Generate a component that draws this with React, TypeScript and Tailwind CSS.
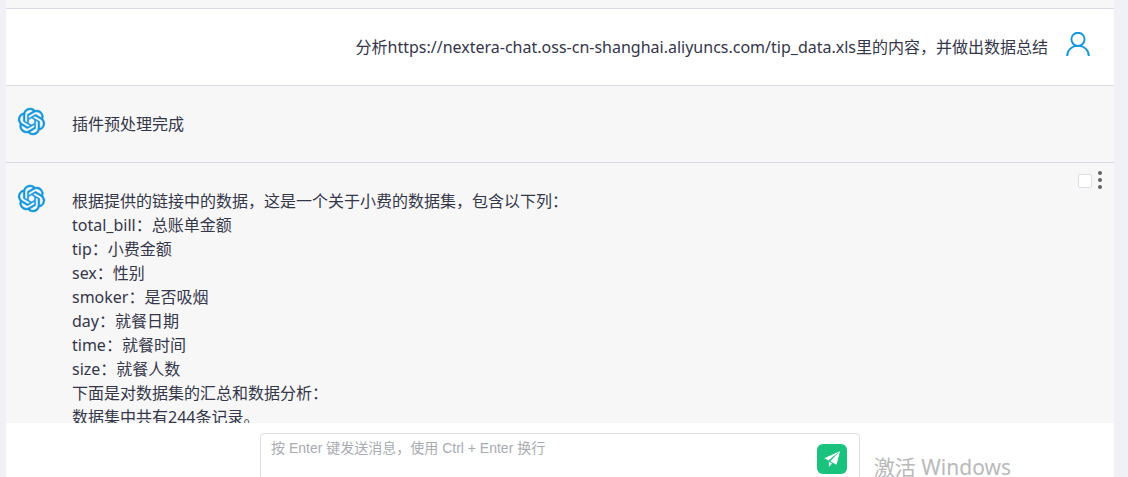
import type { ReactNode } from "react";
import { SiOpenai } from "react-icons/si";

const analysis = [
  "根据提供的链接中的数据，这是一个关于小费的数据集，包含以下列：",
  "total_bill：总账单金额",
  "tip：小费金额",
  "sex：性别",
  "smoker：是否吸烟",
  "day：就餐日期",
  "time：就餐时间",
  "size：就餐人数",
  "下面是对数据集的汇总和数据分析：",
  "数据集中共有244条记录。",
];

function UserIcon() {
  return (
    <svg viewBox="0 0 24 24" className="size-6" fill="none" stroke="#1296db" strokeWidth="1.9" aria-hidden="true">
      <circle cx="12" cy="7.3" r="6.6" />
      <path d="M1.2 24C1.2 17.8 6 13.9 12 13.9S22.800 17.800 22.800 24" />
    </svg>
  );
}

function SendIcon() {
  return (
    <svg viewBox="0 0 20 20" className="size-[18px]" fill="#fff" aria-hidden="true">
      <path d="M19 1 1.500 9.200 6 11.800Z" />
      <path d="M19 1 8 12.500 15 16.500Z" />
      <path d="M6.500 13 6.500 19 10 15Z" />
    </svg>
  );
}

function BotMessage({ children, actions }: { children: ReactNode; actions?: ReactNode }) {
  return (
    <article className="relative flex gap-[27px] border-b border-[#d9dae5] bg-[#f7f7f7] px-3">
      <SiOpenai
        className="mt-[22px] size-[27px] shrink-0 overflow-visible text-[#1296db]"
        stroke="currentColor"
        strokeWidth="0.4"
        aria-hidden="true"
      />
      <div className="py-[26px]">{children}</div>
      {actions}
    </article>
  );
}

export default function App() {
  return (
    <div className="h-screen overflow-hidden bg-[#f0f1f7] pr-3.5 pl-1.5 font-['Noto_Sans','Noto_Sans_CJK_SC',sans-serif] text-base leading-6 text-[#34364a]">
      <main className="flex h-full flex-col bg-white">
        <section className="min-h-0 flex-1 overflow-hidden">
          <div className="h-[9px] border-b border-[#d9dae5] bg-[#f7f7f7]" />
          <article className="flex items-start justify-end gap-[18px] border-b border-[#d9dae5] bg-white pr-6 pl-3">
            <p className="py-[26px] whitespace-nowrap">
              分析https://nextera-chat.oss-cn-shanghai.aliyuncs.com/tip_data.xls里的内容，并做出数据总结
            </p>
            <div className="mt-[23px] shrink-0">
              <UserIcon />
            </div>
          </article>
          <BotMessage>
            <p>插件预处理完成</p>
          </BotMessage>
          <BotMessage
            actions={
              <div className="absolute top-2 right-2.5 flex items-center gap-1">
                <input
                  type="checkbox"
                  aria-label="选择消息"
                  className="size-3.5 appearance-none rounded-[2px] border border-[#dcdfe6] bg-white checked:bg-[#1296db]"
                />
                <button type="button" aria-label="更多" className="block">
                  <svg viewBox="0 0 8 20" className="h-5 w-2" fill="#606266" aria-hidden="true">
                    <circle cx="4" cy="2" r="2" />
                    <circle cx="4" cy="9" r="2" />
                    <circle cx="4" cy="16" r="2" />
                  </svg>
                </button>
              </div>
            }
          >
            {analysis.map((line) => (
              <p key={line}>{line}</p>
            ))}
          </BotMessage>
        </section>
        <footer className="relative flex h-[54px] shrink-0 justify-center overflow-hidden pt-2.5">
          <form className="flex h-20 w-[600px] items-start rounded border border-[#dcdfe6] bg-white pr-3">
            <textarea
              aria-label="消息"
              placeholder="按 Enter 键发送消息，使用 Ctrl + Enter 换行"
              className="h-full flex-1 resize-none bg-transparent px-2.5 py-1 font-['Liberation_Sans','Noto_Sans_CJK_SC',sans-serif] text-sm leading-[21px] outline-none placeholder:text-[#a8abb2]"
            />
            <button
              type="button"
              aria-label="发送"
              className="mt-2.5 flex size-[30px] items-center justify-center rounded-md bg-[#19c37d]"
            >
              <SendIcon />
            </button>
          </form>
          <p className="absolute right-[103px] bottom-0 text-[21px] leading-5 whitespace-nowrap text-[#b9b9b9]">
            激活 Windows
          </p>
        </footer>
      </main>
    </div>
  );
}
